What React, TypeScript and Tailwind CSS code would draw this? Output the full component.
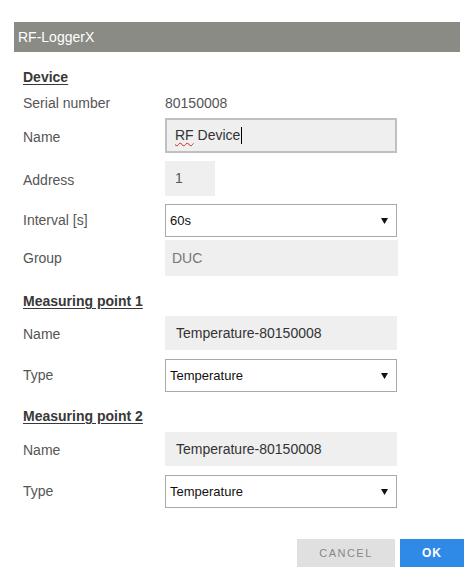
import React from "react";

const Arrow = () => (
  <svg width="7" height="7" viewBox="0 0 7 7" className="block">
    <path d="M0 1 L7 1 L3.5 7 Z" fill="#111" />
  </svg>
);

function Row({ label, h, mt, lp = "", children }: { label: string; h: string; mt: string; lp?: string; children: React.ReactNode }) {
  return (
    <div className={`flex items-center ${h} ${mt}`}>
      <div className={`w-[142px] shrink-0 text-[14px] text-[#555] ${lp}`}>{label}</div>
      {children}
    </div>
  );
}

function Select({ value }: { value: string }) {
  return (
    <div className="flex h-full w-[232px] items-center justify-between border border-[#a9a9a9] bg-white pl-[4px] pr-[8px] text-[13px] text-[#111]">
      <span>{value}</span>
      <Arrow />
    </div>
  );
}

export default function App() {
  return (
    <div className="min-h-[577px] bg-white pl-[14px] pt-[22px] font-['Liberation_Sans',Arial,sans-serif]">
      <div className="w-[446px]">
        <div className="h-[30px] bg-[#8b8b86] pl-[4px] text-[14px] leading-[30px] text-white">RF-LoggerX</div>
        <div className="pl-[9px]">
          <div className="mt-[17px] h-4 text-[14px] font-bold leading-4 text-[#383838] underline underline-offset-2">Device</div>
          <Row label="Serial number" h="h-5" mt="mt-[8px]">
            <span className="text-[14px] text-[#555]">80150008</span>
          </Row>
          <Row label="Name" h="h-[35px]" mt="mt-[5px]" lp="pt-[3px]">
            <div className="flex h-full w-[232px] items-center border-2 border-[#c0c0c0] bg-[#efefef] pl-[8px] text-[14px] text-[#333]">
              <span className="underline decoration-wavy decoration-[#e02020] decoration-1 underline-offset-2">RF</span>
              <span>&nbsp;Device</span>
              <span className="ml-[1px] inline-block h-[17px] w-px bg-black" />
            </div>
          </Row>
          <Row label="Address" h="h-[35px]" mt="mt-[8px]" lp="pt-[3px]">
            <div className="flex h-full w-[50px] items-center bg-[#efefef] pl-[10px] text-[14px] text-[#555]">1</div>
          </Row>
          <Row label="Interval [s]" h="h-[33px]" mt="mt-[8px]">
            <Select value="60s" />
          </Row>
          <Row label="Group" h="h-[36px]" mt="mt-[3px]">
            <div className="flex h-full w-[233px] items-center bg-[#efefef] pl-[7px] text-[14px] text-[#777]">DUC</div>
          </Row>

          <div className="mt-[17px] h-4 text-[14px] font-bold leading-4 text-[#383838] underline underline-offset-2">Measuring point 1</div>
          <Row label="Name" h="h-[34px]" mt="mt-[7px]" lp="pt-[3px]">
            <div className="flex h-full w-[232px] items-center bg-[#efefef] pl-[11px] text-[14px] text-[#333]">Temperature-80150008</div>
          </Row>
          <Row label="Type" h="h-[33px]" mt="mt-[9px]">
            <Select value="Temperature" />
          </Row>

          <div className="mt-[16px] h-4 text-[14px] font-bold leading-4 text-[#383838] underline underline-offset-2">Measuring point 2</div>
          <Row label="Name" h="h-[34px]" mt="mt-[8px]" lp="pt-[3px]">
            <div className="flex h-full w-[232px] items-center bg-[#efefef] pl-[11px] text-[14px] text-[#333]">Temperature-80150008</div>
          </Row>
          <Row label="Type" h="h-[33px]" mt="mt-[9px]">
            <Select value="Temperature" />
          </Row>

          <div className="-mr-[4px] mt-[31px] flex justify-end gap-[5px]">
            <button className="h-[28px] w-[98px] bg-[#e0e0e0] text-[11px] tracking-[1.5px] text-[#888]">CANCEL</button>
            <button className="h-[28px] w-[64px] bg-[#2e8ae6] text-[12px] font-bold tracking-[1px] text-white">OK</button>
          </div>
        </div>
      </div>
    </div>
  );
}
